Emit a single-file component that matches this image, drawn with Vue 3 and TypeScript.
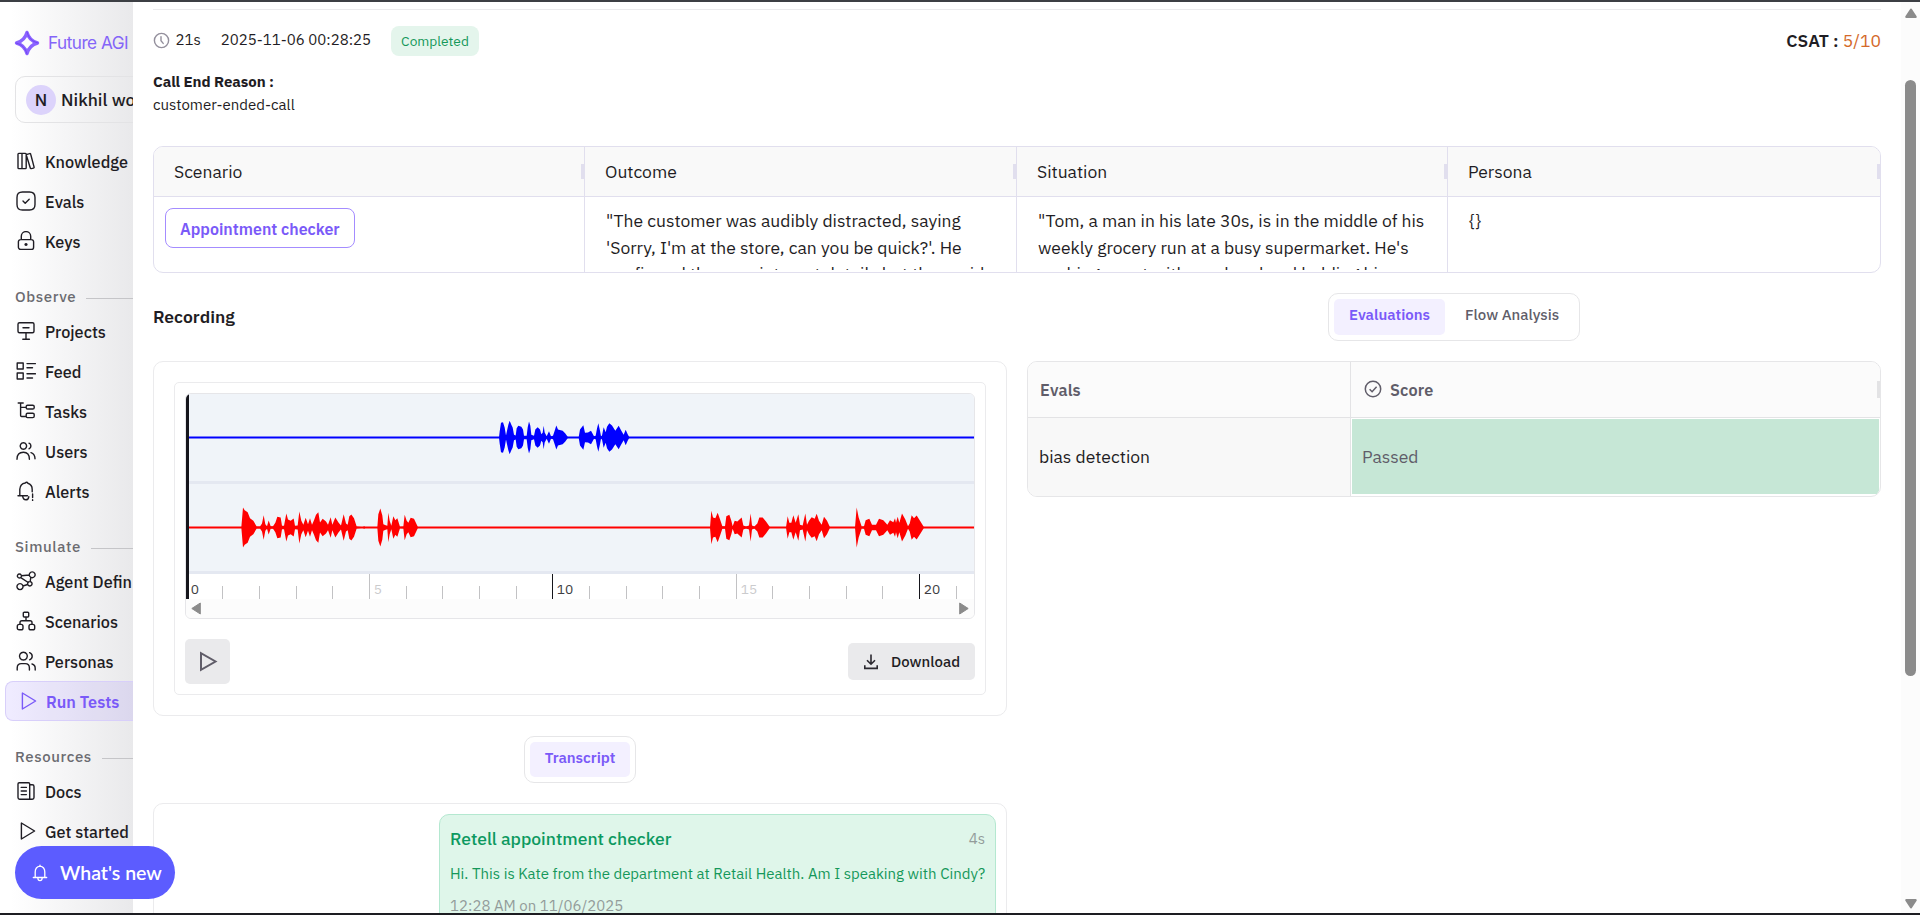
<script setup lang="ts">
interface NavItem { label: string; icon: string; active?: boolean }
interface NavGroup { title?: string; items: NavItem[] }

const nav: NavGroup[] = [
  {
    items: [
      { label: 'Knowledge', icon: 'books' },
      { label: 'Evals', icon: 'evals' },
      { label: 'Keys', icon: 'lock' },
    ],
  },
  {
    title: 'Observe',
    items: [
      { label: 'Projects', icon: 'board' },
      { label: 'Feed', icon: 'feed' },
      { label: 'Tasks', icon: 'tree' },
      { label: 'Users', icon: 'users' },
      { label: 'Alerts', icon: 'alert' },
    ],
  },
  {
    title: 'Simulate',
    items: [
      { label: 'Agent Defin', icon: 'nodes' },
      { label: 'Scenarios', icon: 'org' },
      { label: 'Personas', icon: 'personas' },
      { label: 'Run Tests', icon: 'play', active: true },
    ],
  },
  {
    title: 'Resources',
    items: [
      { label: 'Docs', icon: 'docs' },
      { label: 'Get started', icon: 'play' },
    ],
  },
]

const icons: Record<string, string> = {
  books: 'M2 3.2a.8.8 0 0 1 .8-.8H6v15.200H2.800a.8.8 0 0 1-.8-.8zM6 2.400h3.400a.8.8 0 0 1 .8.8v13.600a.8.8 0 0 1-.8.8H6zM11 3.400l2.700-.8a.8.8 0 0 1 1 .6l3.400 12.900a.8.8 0 0 1-.6 1l-2.200.5a.8.8 0 0 1-1-.6L10.600 5',
  evals: 'M6.500 1h7Q19 1 19 6.500v7Q19 19 13.500 19h-7Q1 19 1 13.500v-7Q1 1 6.500 1zM7 10l2.200 2.200L13.200 8.200',
  lock: 'M4.600 8.600h10.800a2.200 2.200 0 0 1 2.200 2.200v5.400a2.200 2.200 0 0 1-2.200 2.200H4.600a2.200 2.200 0 0 1-2.200-2.200v-5.400a2.200 2.200 0 0 1 2.200-2.200zM5.300 8.400V5.300a4.700 4.700 0 0 1 9.400 0v3.100M10 12.600a.9.9 0 1 0 .01 0zM10 13.200v.6',
  board: 'M3.500 1.800h13a1.500 1.500 0 0 1 1.500 1.500v7a1.500 1.500 0 0 1-1.500 1.500h-13A1.500 1.500 0 0 1 2 10.300v-7a1.500 1.500 0 0 1 1.500-1.500zM7 6.800h6M10 12v6M6.800 18.200h6.600',
  feed: 'M1.200 2h6v6h-6zM1.200 12h6v6h-6zM11 2.600h8.400M11 6.800h5.500M11 12.800h8.400M11 17h5.500',
  tree: 'M2.200 2h5M4.600 2v12.500q0 1 1 1H10M4.600 6.400H10M11.500 4.200h5.200q1.500 0 1.500 1.300v1.200q0 1.300-1.500 1.300h-5.200q-1.300 0-1.300-1.300V5.500q0-1.300 1.300-1.300zM11.500 12.200h5.200q1.500 0 1.500 1.300v1.800q0 1.300-1.500 1.300h-5.200q-1.300 0-1.300-1.300v-1.800q0-1.300 1.300-1.300z',
  users: 'M7.400 1.800a3.200 3.200 0 1 0 .01 0zM1 18.200q0-7 6.400-7 6 0 6 7M13 2.200a3 3 0 0 1 0 5.600M15 11.600q4 1.400 4 6.200',
  alert: 'M2 14.800h9.500M3.800 14.800V8.200q.4-5.400 5.400-6.200 1.600-1.600 2.600.2 4.400 1.200 4.400 6.200v2.300M6.600 15.200q.6 3.600 3.200 3.600t3-3M16.600 13v3.600M16.600 18.800v.8',
  nodes: 'M3.400 3a2 2 0 1 0 .01 0zM16.200.9a2.900 2.900 0 1 0 .01 0zM13.800 10.600a2.200 2.200 0 1 0 .01 0zM4 12.600a3 3 0 1 0 .01 0zM5.400 4.800l7.900-.8M14.800 6.400l-.6 4M4.800 6.600l7.400 4.900M7 15l4.600-1.500',
  org: 'M8.200 1.200h3.600q.9 0 .9.900v3q0 .9-.9.900H8.200q-.9 0-.9-.9v-3q0-.9.900-.9zM10 6.200V9.600M4 13.200v-1.600q0-1.900 1.900-1.900h8.200q1.900 0 1.900 1.900v1.600M3.200 13.400h1.900q1.900 0 1.900 2v1.500q0 1.900-1.900 1.900H3.200q-1.900 0-1.900-1.900v-1.500q0-2 1.900-2zM14.900 13.400h1.900q1.900 0 1.900 2v1.500q0 1.900-1.900 1.900h-1.900q-1.900 0-1.900-1.900v-1.500q0-2 1.900-2z',
  personas: 'M7.400 1.200a3.900 3.900 0 1 0 .01 0zM1.200 19v-2q0-4.400 4.200-4.400h3.800q4.200 0 4.200 4.400v2M13.600 1.600q2.600 1 2.600 3.600t-2.600 3.600M16 13q3.200.8 3.200 4.200V19',
  play: 'M5.400 2v16L18.600 10z',
  docs: 'M3.200 1.800h9.300q1.200 0 1.200 1.200v15.200H3.600Q2 18.200 2 16.600V3q0-1.200 1.200-1.200zM13.800 3.800h2.400q1.800 0 1.800 1.700v11q0 1.700-1.700 1.700h-3M5.200 6.400h5.200M5.200 10h5.200M5.200 13.600h5.200',
}

const scenarioCols = [
  { title: 'Scenario', chip: 'Appointment checker' },
  {
    title: 'Outcome',
    lines: ['"The customer was audibly distracted, saying', "'Sorry, I'm at the store, can you be quick?'. He", 'confirmed the appointment details but then said'],
  },
  {
    title: 'Situation',
    lines: ['"Tom, a man in his late 30s, is in the middle of his', "weekly grocery run at a busy supermarket. He's", 'pushing a cart with one hand and holding his'],
  },
  { title: 'Persona', lines: ['{}'] },
]

/* Amplitude envelopes: pairs of position and half height, in thirds of a pixel. */
const userWave = [
  1047, 1, 1049, 18, 1053, 44, 1059, 46, 1064, 30, 1068, 6, 1071, 20, 1075, 38, 1079, 50, 1084, 38, 1088, 30, 1092, 8, 1097, 6, 1100, 28, 1105, 35, 1114, 32, 1119, 24, 1122, 5, 1130, 5, 1133, 30, 1137, 48, 1141, 35, 1144, 8, 1152, 5, 1156, 24, 1163, 31, 1170, 24, 1174, 10, 1178, 14, 1181, 35, 1184, 15, 1190, 4, 1197, 19, 1203, 4, 1209, 5, 1214, 20, 1219, 36, 1224, 24, 1238, 20, 1246, 12, 1254, 1,
  1286, 1, 1290, 24, 1300, 37, 1305, 14, 1314, 15, 1323, 20, 1332, 4, 1337, 5, 1341, 27, 1345, 43, 1350, 20, 1353, 4, 1356, 6, 1361, 31, 1367, 16, 1371, 32, 1378, 43, 1386, 36, 1396, 20, 1406, 35, 1414, 20, 1421, 8, 1427, 23, 1433, 10, 1438, 1,
]
const agentWave = [
  274, 1, 279, 60, 284, 52, 293, 46, 300, 28, 310, 20, 320, 3, 330, 3, 336, 12, 341, 37, 346, 10, 351, 4, 356, 21, 362, 4, 369, 4, 376, 14, 382, 32, 392, 30, 396, 5, 402, 5, 409, 42, 414, 24, 422, 20, 431, 27, 435, 5, 443, 6, 448, 48, 454, 20, 460, 8, 467, 29, 474, 10, 480, 28, 486, 8, 492, 22, 498, 38, 505, 46, 510, 15, 518, 26, 528, 18, 534, 8, 542, 31, 547, 8, 556, 30, 566, 14, 573, 6, 581, 40, 588, 12, 593, 8, 598, 34, 604, 39, 612, 28, 620, 3, 640, 1, 642, 5, 645, 1,
  682, 1, 685, 40, 691, 57, 697, 36, 700, 10, 707, 7, 712, 5, 715, 44, 719, 20, 724, 5, 730, 34, 736, 22, 742, 28, 750, 2, 760, 3, 764, 38, 770, 20, 775, 14, 782, 29, 792, 26, 804, 1,
  1680, 1, 1684, 50, 1689, 30, 1696, 28, 1703, 44, 1710, 25, 1717, 4, 1725, 4, 1729, 34, 1738, 38, 1744, 20, 1748, 4, 1754, 20, 1762, 18, 1775, 30, 1780, 6, 1788, 3, 1797, 6, 1802, 42, 1806, 6, 1813, 3, 1822, 12, 1828, 30, 1838, 30, 1848, 18, 1860, 1,
  1908, 1, 1913, 34, 1918, 14, 1924, 14, 1930, 37, 1937, 14, 1945, 40, 1950, 8, 1958, 6, 1966, 42, 1971, 8, 1977, 20, 1985, 31, 1994, 26, 2000, 41, 2007, 20, 2015, 8, 2022, 32, 2031, 20, 2040, 1,
  2115, 1, 2120, 60, 2126, 30, 2135, 3, 2142, 4, 2147, 22, 2158, 26, 2166, 8, 2178, 8, 2187, 26, 2200, 22, 2212, 8, 2220, 22, 2230, 16, 2235, 28, 2238, 14, 2243, 32, 2248, 14, 2256, 42, 2266, 24, 2274, 4, 2279, 12, 2285, 37, 2292, 28, 2300, 36, 2310, 20, 2322, 1,
]

const CENTER = 43.5
function envelope(data: number[]): string {
  const upper: string[] = []
  const lower: string[] = []
  for (let i = 0; i < data.length; i += 2) {
    const x = (data[i] / 3 - 36).toFixed(2)
    const a = data[i + 1] / 3
    upper.push(`${x},${(CENTER - a).toFixed(2)}`)
    lower.unshift(`${x},${(CENTER + a).toFixed(2)}`)
  }
  return [...upper, ...lower].join(' ')
}

const tracks = [
  { name: 'user', color: '#0000ff', points: envelope(userWave) },
  { name: 'agent', color: '#ff0000', points: envelope(agentWave) },
]

const ticks = Array.from({ length: 22 }, (_, i) => ({
  x: Math.floor(i * 36.67) + 0.5,
  major: i % 5 === 0,
  strong: i % 10 === 0,
  label: i % 5 === 0 ? String(i) : '',
}))
</script>

<template>
  <div class="app">
    <aside class="sidebar">
      <div class="logo">
        <svg width="26" height="26" viewBox="0 0 26 26">
          <path d="M13 2.500C14.600 8.200 17.800 11.400 23.500 13 17.800 14.600 14.600 17.800 13 23.500 11.400 17.800 8.200 14.600 2.500 13 8.200 11.400 11.400 8.200 13 2.500z" fill="none" stroke="#8a63ff" stroke-width="3.400" stroke-linejoin="round" />
          <path d="M13 2C14.600 8 18 11.400 24 13M2 13c6 1.600 9.400 5 11 11" fill="none" stroke="#7446f5" stroke-width="1" />
        </svg>
        <span>Future AGI</span>
      </div>
      <div class="workspace"><span class="avatar">N</span><span>Nikhil wo</span></div>
      <nav>
        <template v-for="(group, g) in nav" :key="g">
          <div v-if="group.title" class="section"><span>{{ group.title }}</span><i></i></div>
          <div v-for="item in group.items" :key="item.label" class="item" :class="{ active: item.active }">
            <svg width="20" height="20" viewBox="0 0 20 20" fill="none" stroke="currentColor" stroke-width="1.400" stroke-linecap="round" stroke-linejoin="round"><path :d="icons[item.icon]" /></svg>
            <span>{{ item.label }}</span>
          </div>
        </template>
      </nav>
    </aside>

    <main class="panel">
      <div class="meta">
        <svg width="17" height="17" viewBox="0 0 17 17" fill="none" stroke="#938f9c" stroke-width="1.400" stroke-linecap="round"><circle cx="8.500" cy="8.500" r="7.100" /><path d="M8 4.600v4.200l2.200 2.600" /></svg>
        <span class="dur">21s</span>
        <span class="date">2025-11-06 00:28:25</span>
        <span class="status">Completed</span>
        <span class="csat"><b>CSAT :</b> <em>5/10</em></span>
      </div>
      <div class="reason"><b>Call End Reason :</b><span>customer-ended-call</span></div>

      <section class="scenario">
        <div v-for="col in scenarioCols" :key="col.title" class="col">
          <div class="head"><span>{{ col.title }}</span><i class="grip"></i></div>
          <div class="cell">
            <button v-if="col.chip" class="chip">{{ col.chip }}</button>
            <p v-for="line in col.lines" :key="line">{{ line }}</p>
          </div>
        </div>
      </section>

      <div class="split">
        <div class="left">
          <h2>Recording</h2>
          <div class="card recorder">
            <div class="inner">
              <div class="wave">
                <i class="cursor"></i>
                <svg v-for="t in tracks" :key="t.name" class="track" width="788" height="90" viewBox="0 0 788 90">
                  <rect width="788" height="87" fill="#f0f4f9" />
                  <rect y="87" width="788" height="3" fill="#e4e8f1" />
                  <rect y="42" width="788" height="3" :fill="t.color" opacity="0.5" />
                  <rect y="43" width="788" height="1" :fill="t.color" />
                  <polygon :points="t.points" :fill="t.color" />
                </svg>
                <svg class="ruler" width="788" height="25" viewBox="0 0 788 25">
                  <g v-for="t in ticks" :key="t.x">
                    <line :x1="t.x" :x2="t.x" :y1="t.major ? 0 : 12" y2="25" :stroke="t.strong ? '#15151b' : '#c2c2c4'" />
                    <text v-if="t.label" :x="t.x + 4.300" y="20" :fill="t.strong ? '#3d3d42' : '#cbcbcd'">{{ t.label }}</text>
                  </g>
                </svg>
                <div class="hscroll">
                  <svg width="10" height="13" viewBox="0 0 10 13"><path d="M9.300 1v11L.8 6.500z" fill="#8b8b8b" stroke="#8b8b8b" stroke-linejoin="round" /></svg>
                  <svg width="10" height="13" viewBox="0 0 10 13"><path d="M.7 1v11L9.200 6.500z" fill="#8b8b8b" stroke="#8b8b8b" stroke-linejoin="round" /></svg>
                </div>
              </div>
              <div class="controls">
                <button class="playbtn"><svg width="21" height="23" viewBox="0 0 21 23" fill="none" stroke="#605d69" stroke-width="2"><path d="M4 3.200v16.600L18.500 11.500z" /></svg></button>
                <button class="download">
                  <svg width="16" height="16" viewBox="0 0 16 16" fill="none" stroke="#2b2930" stroke-width="1.600"><path d="M8 .5v9.500M4 6.200l4 4 4-4M1.800 11.200v3.200h12.400v-3.200" /></svg>
                  <span>Download</span>
                </button>
              </div>
            </div>
          </div>
          <div class="tabs transcript-tabs"><span class="tab on">Transcript</span></div>
          <div class="card transcript">
            <div class="bubble">
              <div class="who"><b>Retell appointment checker</b><span>4s</span></div>
              <p>Hi. This is Kate from the department at Retail Health. Am I speaking with Cindy?</p>
              <time>12:28 AM on 11/06/2025</time>
            </div>
          </div>
        </div>

        <div class="right">
          <div class="tabs"><span class="tab on">Evaluations</span><span class="tab">Flow Analysis</span></div>
          <div class="evals">
            <div class="eh name">Evals</div>
            <div class="eh">
              <svg width="18" height="18" viewBox="0 0 18 18" fill="none" stroke="#605d69" stroke-width="1.500"><circle cx="9" cy="9" r="7.700" /><path d="M5.600 9.200l2.500 2.500 4.500-5" /></svg>
              <span>Score</span><i class="grip"></i>
            </div>
            <div class="ec name">bias detection</div>
            <div class="ec pass">Passed</div>
          </div>
        </div>
      </div>
    </main>

    <div class="vscroll">
      <svg width="14" height="11" viewBox="0 0 14 11"><path d="M7 1.800l4.600 7H2.400z" fill="#8b8b8b" stroke="#8b8b8b" stroke-width="2.400" stroke-linejoin="round" /></svg>
      <i></i>
      <svg width="14" height="11" viewBox="0 0 14 11"><path d="M7 9.200l4.600-7H2.400z" fill="#8b8b8b" stroke="#8b8b8b" stroke-width="2.400" stroke-linejoin="round" /></svg>
    </div>

    <button class="whats-new">
      <svg width="16" height="18" viewBox="0 0 16 18" fill="none" stroke="#fff" stroke-width="1.300" stroke-linecap="round" stroke-linejoin="round"><path d="M1.300 13.500h13.400M3.200 13.500V8q0-5 4.800-5.800 4.800.8 4.800 5.800v5.500M8 2.200V1.200M5.800 14q.2 2.600 2.200 2.600t2.200-2.600" /></svg>
      <span>What's new</span>
    </button>
  </div>
</template>

<style>
body { margin: 0; overflow: hidden; }
</style>

<style scoped>
* { box-sizing: border-box; }
.app {
  position: relative;
  display: flex;
  width: 1920px;
  height: 915px;
  overflow: hidden;
  border-top: 2px solid #3c3f44;
  border-bottom: 2px solid #1d1d22;
  background: #fff;
  color: #1f1d24;
  font-family: 'IBM Plex Sans', Roboto, sans-serif;
  font-size: 17.5px;
}
button { border: 0; font-family: inherit; padding: 0; }
h2, p { margin: 0; }
svg { display: block; flex: none; }

.sidebar {
  flex: none;
  width: 133px;
  overflow: hidden;
  white-space: nowrap;
  background: linear-gradient(90deg, #fff 8%, #f5f5f6 50%, #e9e9eb 100%);
}
.logo { display: flex; align-items: center; gap: 8px; height: 26px; margin: 28px 0 0 14px; color: #8465f8; font: 400 17.2px/26px Inter, sans-serif; letter-spacing: -0.52px; }
.workspace { display: flex; align-items: center; gap: 5px; width: 220px; height: 47px; margin: 20px 0 0 15px; padding-left: 10px; border: 1px solid #e3e3e5; border-radius: 10px; font-weight: 500; }
.avatar { width: 30px; height: 30px; border-radius: 50%; background: #dcd3fb; text-align: center; line-height: 30px; }
nav { margin-top: 18px; }
.item { display: flex; align-items: center; gap: 9px; height: 40px; padding-left: 16px; font-size: 16.25px; font-weight: 500; }
.item.active { margin-left: 5px; width: 200px; padding-left: 11px; border: 1px solid #d8cffa; border-right: 0; border-radius: 8px; background: rgba(120, 87, 252, 0.12); color: #7a5af8; font-weight: 600; }
.section { display: flex; align-items: center; gap: 10px; height: 50px; padding: 20px 0 0 15px; color: #6b6b70; font-size: 15px; font-weight: 500; letter-spacing: 0.6px; }
.section i { flex: 1; height: 1px; margin-top: 4px; background: #c5c5c8; }

.panel { flex: none; width: 1768px; padding: 7px 20px 0; overflow: hidden; }
.meta { display: flex; align-items: center; height: 62px; border-top: 1px solid #ebebed; font-size: 15px; }
.dur { margin: -2px 20px 0 5.5px; }
.date { margin-top: -2px; }
.status { height: 30px; margin-left: 20px; padding: 0 10px; border-radius: 8px; background: #e4f5ec; color: #15985a; font-size: 13.75px; line-height: 30px; }
.csat { margin-left: auto; font-size: 17.5px; }
.csat b { font-weight: 600; }
.csat em { color: #d4692a; font-style: normal; }
.reason { display: flex; flex-direction: column; height: 75px; font-size: 15px; line-height: 22.5px; }
.reason b { letter-spacing: -0.05px; }

.scenario { display: grid; grid-template-columns: 431px 432px 431px 1fr; height: 127px; overflow: hidden; border: 1px solid #e1dfee; border-radius: 10px; }
.col { min-width: 0; border-right: 1px solid #e1dfee; }
.col:last-child { border-right: 0; }
.head { position: relative; height: 50px; padding: 0 20px; background: #f9f9f9; border-bottom: 1px solid #e1dfee; line-height: 49px; }
.grip { position: absolute; right: 0; top: 17px; width: 3px; height: 15px; background: #e1dfee; }
.cell { height: 73px; padding: 10px 0 0 21px; overflow: hidden; }
.cell p { line-height: 27px; white-space: nowrap; }
.cell p:nth-child(3) { margin-top: -1px; }
.chip { display: block; height: 40px; margin: 1px 0 0 -10px; padding: 0 14px; border: 1px solid #a48cff; border-radius: 8px; background: #fff; color: #7a5af8; font-size: 16px; font-weight: 600; line-height: 40px; }

.split { display: flex; gap: 20px; }
.left, .right { width: 854px; }
h2 { height: 88px; padding-top: 30px; font-size: 17.5px; font-weight: 600; line-height: 27px; }
.card { border: 1px solid #ebebed; border-radius: 10px; }
.recorder { height: 355px; padding: 20px; }
.inner { height: 313px; padding: 10px 10px 0; border: 1px solid #ebebed; border-radius: 5px; }
.wave { position: relative; width: 790px; height: 226px; overflow: hidden; border: 1px solid #e6e6e9; border-radius: 6px; }
.cursor { position: absolute; left: 0; top: 0; width: 3px; height: 205px; background: #15151b; }
.ruler text { font-size: 13.75px; }
.hscroll { display: flex; justify-content: space-between; align-items: center; height: 19px; padding: 0 5px; background: #fcfcfc; }
.controls { display: flex; justify-content: space-between; align-items: center; margin-top: 20px; }
.playbtn { display: flex; align-items: center; justify-content: center; width: 45px; height: 45px; border-radius: 5px; background: #eaeaec; }
.download { display: flex; align-items: center; gap: 12px; width: 127px; height: 37px; padding-left: 15px; border-radius: 5px; background: #eaeaec; color: #1f1d24; font-size: 15px; font-weight: 500; }

.tabs { display: flex; width: max-content; height: 48px; margin: 20px auto 0; padding: 5px; border: 1px solid #e6e6e8; border-radius: 10px; font-size: 15px; font-weight: 500; color: #605d69; }
.tab { height: 36px; padding: 0 15px; border-radius: 5px; line-height: 31px; }
.tab + .tab { margin-left: 5px; }
.tab.on { background: #f3f0ff; color: #7a5af8; font-weight: 600; }
.transcript-tabs { height: 47px; }
.transcript-tabs .tab { height: 35px; }
.transcript { height: 200px; margin-top: 20px; padding: 10px; }
.bubble { width: 557px; height: 200px; margin-left: auto; padding: 10px 10px; border: 1px solid #b4e8d0; border-radius: 10px; background: #dff6ea; }
.who { display: flex; justify-content: space-between; align-items: center; height: 26px; }
.who b { color: #0c9960; font-weight: 500; }
.who span, time { color: #939c9a; font-size: 15px; }
.bubble p { margin-top: 11px; color: #15985a; font-size: 15px; line-height: 24px; white-space: nowrap; }
time { display: block; margin-top: 8px; line-height: 24px; }

.evals { display: grid; grid-template-columns: 323px 1fr; grid-template-rows: 56px 79px; height: 136px; margin-top: 20px; overflow: hidden; border: 1px solid #e6e6e8; border-radius: 10px; }
.eh { position: relative; display: flex; align-items: center; gap: 8px; padding: 0 0 1px 13px; background: #fbfbfb; border-bottom: 1px solid #e3e3e5; color: #605d69; font-size: 16.25px; font-weight: 600; letter-spacing: 0.15px; }
.eh.name { padding-left: 12px; }
.eh .grip { top: 19px; height: 17px; background: #e3e3e5; }
.name { border-right: 1px solid #e3e3e5; }
.ec { display: flex; align-items: center; padding-left: 11px; }
.ec.name { padding-bottom: 2px; background: #f8f8f8; }
.pass { margin: 1px 1px 3px; padding-left: 10px; background: #c6e7d6; color: #605d69; }

.vscroll { display: flex; flex-direction: column; align-items: center; flex: none; width: 19px; padding: 6px 0 4px; background: #fcfcfc; }
.vscroll i { width: 11px; height: 596px; margin: 61px 0 auto 0; border-radius: 6px; background: #8b8b8b; }

.whats-new { position: absolute; left: 15px; top: 844px; display: flex; align-items: center; gap: 12px; width: 160px; height: 53px; padding-left: 17px; border-radius: 27px; background: #5c5cff; color: #fff; font-family: Lato, sans-serif; font-size: 19.5px; font-weight: 600; }
</style>
